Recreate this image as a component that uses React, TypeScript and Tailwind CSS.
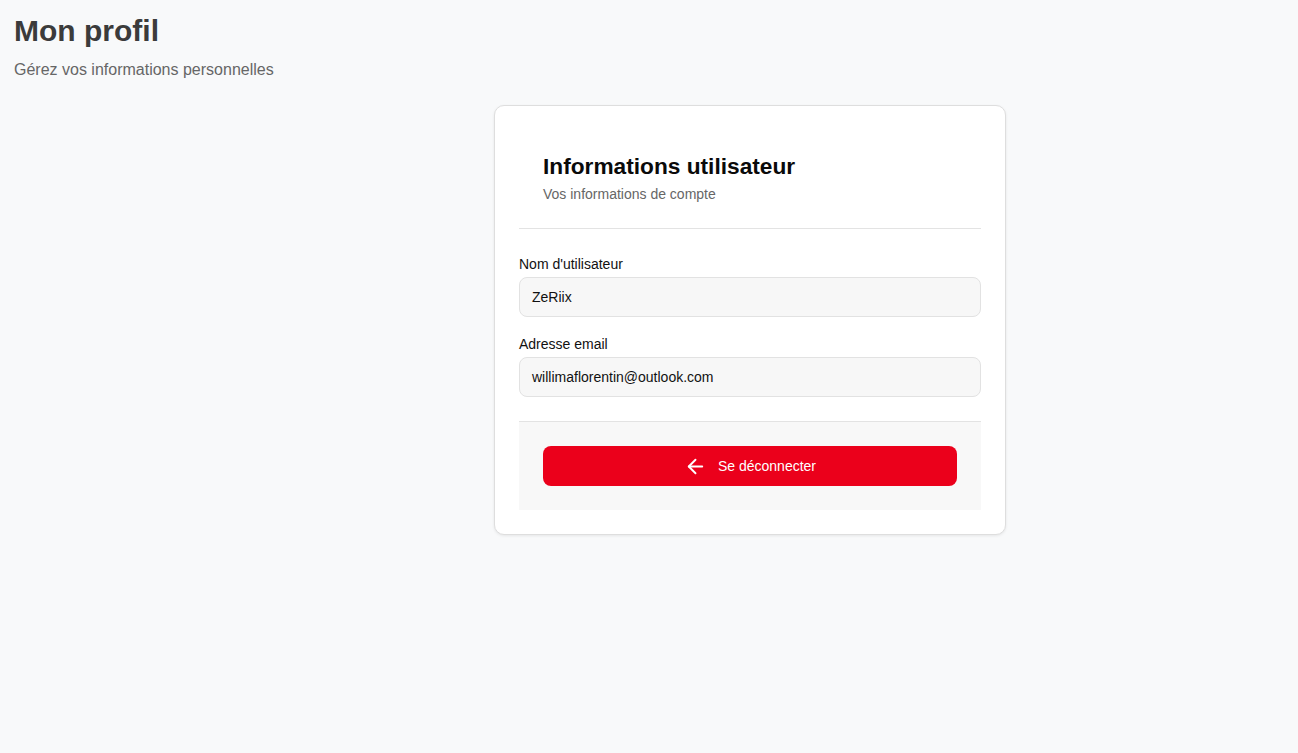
import { ArrowLeft } from "lucide-react";

type FieldProps = {
  label: string;
  value: string;
};

function Field({ label, value }: FieldProps) {
  return (
    <div className="flex flex-col gap-[3px]">
      <label className="text-sm leading-5 text-[#111]">{label}</label>
      <div className="flex h-10 items-center rounded-lg border border-[#e2e2e2] bg-[#f7f7f7] px-3 text-sm text-[#111]">
        {value}
      </div>
    </div>
  );
}

export default function App() {
  return (
    <div className="min-h-[753px] bg-[#f8f9fa] font-['Liberation_Sans',Arial,sans-serif]">
      <div className="px-[14px] pt-[13px]">
        <h1 className="text-[30px] font-bold leading-9 text-[#3b3b3b]">Mon profil</h1>
        <p className="mt-[9px] text-base leading-6 text-[#666]">Gérez vos informations personnelles</p>
      </div>

      <div className="flex justify-center pl-[202px] pt-[23px]">
        <div className="w-[512px] rounded-[10px] border border-[#dedede] bg-white p-6 shadow-[0_1px_3px_rgba(0,0,0,0.08)]">
          <div className="border-b border-[#e3e3e3] px-6 pb-[24px] pt-[22px]">
            <h2 className="text-[22.7px] font-bold leading-7 text-[#0a0a0a]">Informations utilisateur</h2>
            <p className="mt-1 text-sm leading-5 text-[#666]">Vos informations de compte</p>
          </div>

          <div className="flex flex-col gap-[17px] pb-6 pt-[25px]">
            <Field label="Nom d'utilisateur" value="ZeRiix" />
            <Field label="Adresse email" value="willimaflorentin@outlook.com" />
          </div>

          <div className="border-t border-[#e3e3e3] bg-[#f8f8f8] p-6">
            <button className="flex h-10 w-full items-center justify-center gap-[11px] rounded-lg bg-[#eb001b] text-sm text-white">
              <ArrowLeft size={23} strokeWidth={2} />
              <span>Se déconnecter</span>
            </button>
          </div>
        </div>
      </div>
    </div>
  );
}
